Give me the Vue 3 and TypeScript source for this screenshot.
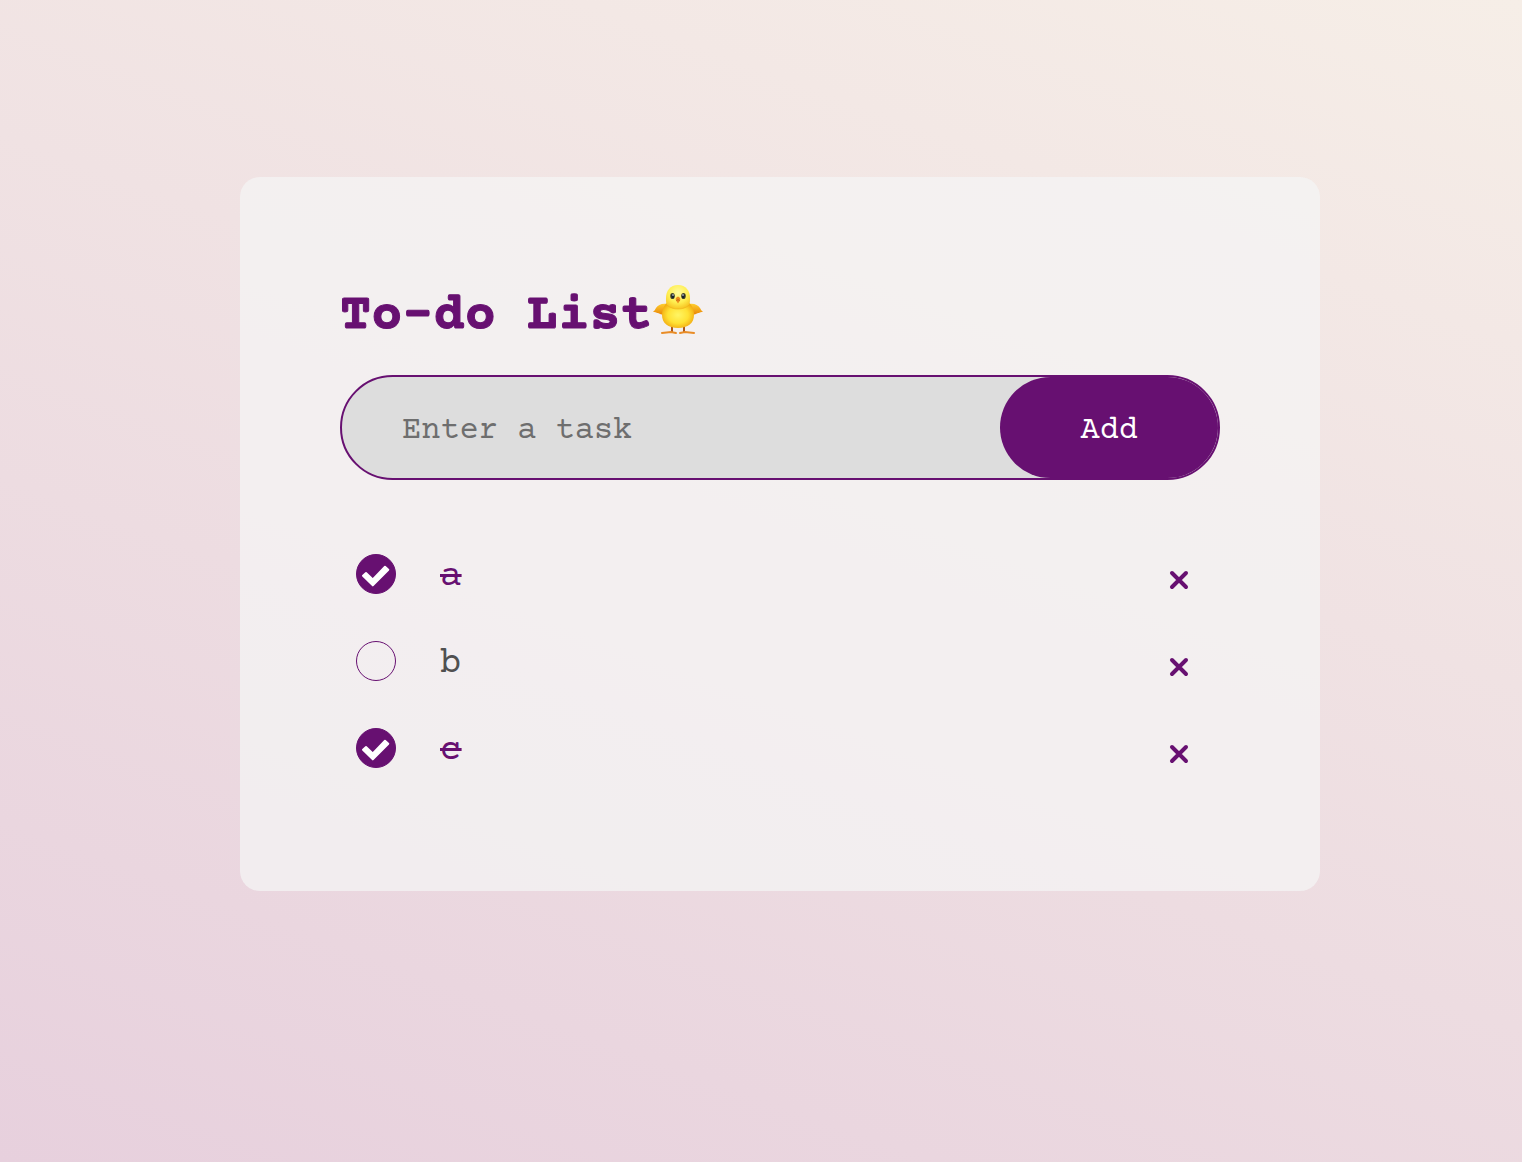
<script setup lang="ts">
import { ref } from 'vue'

interface Task {
  id: number
  text: string
  done: boolean
}

const draft = ref('')
const tasks = ref<Task[]>([
  { id: 1, text: 'a', done: true },
  { id: 2, text: 'b', done: false },
  { id: 3, text: 'c', done: true },
])
let nextId = 4

function addTask() {
  const text = draft.value.trim()
  if (!text) return
  tasks.value.push({ id: nextId++, text, done: false })
  draft.value = ''
}

function removeTask(id: number) {
  tasks.value = tasks.value.filter((task) => task.id !== id)
}
</script>

<template>
  <div class="page">
    <main class="card">
      <h1 class="title">
        <span>To-do List</span>
        <svg class="chick" viewBox="0 0 52 52" aria-hidden="true">
          <defs>
            <radialGradient id="body" cx="50%" cy="50%" r="58%">
              <stop offset="0" stop-color="#fff564" />
              <stop offset="0.55" stop-color="#ffe235" />
              <stop offset="1" stop-color="#f0a30c" />
            </radialGradient>
            <radialGradient id="head" cx="50%" cy="32%" r="70%">
              <stop offset="0" stop-color="#fffb9c" />
              <stop offset="0.6" stop-color="#ffee50" />
              <stop offset="1" stop-color="#f7c220" />
            </radialGradient>
            <linearGradient id="wing" x1="0" y1="0" x2="0" y2="1">
              <stop offset="0" stop-color="#ffcf30" />
              <stop offset="1" stop-color="#e98607" />
            </linearGradient>
          </defs>
          <g fill="none" stroke-linecap="round">
            <path d="M20 42v6M32 42v6" stroke="#a9561c" stroke-width="2" />
            <path d="M10 49l9-1 5 1M28 49l5-1 9 1" stroke="#e98c26" stroke-width="2" />
          </g>
          <path d="M15 20c-5-1-9 1-11 4-1 2-2 3-3 4 2 0 3 0 4 1 1 0 2 0 3 1 3 1 6 1 8-1zM37 20c5-1 9 1 11 4 1 2 2 3 3 4-2 0-3 0-4 1-1 0-2 0-3 1-3 1-6 1-8-1z" fill="url(#wing)" />
          <path d="M16 18c-4 3-6 8-6 13 0 8 6 13 16 13s16-5 16-13c0-5-2-10-6-13z" fill="url(#body)" />
          <path d="M26 1C18 1 14 7 14 14c0 3 0 5 1 7 3 3 7 4 11 4s8-1 11-4c1-2 1-4 1-7C38 7 34 1 26 1z" fill="url(#head)" />
          <path d="M15 21c3 3 7 4 11 4s8-1 11-4" fill="none" stroke="#eda91a" stroke-width="1" opacity="0.500" />
          <ellipse cx="20.500" cy="12" rx="2.300" ry="3.100" fill="#4b4a28" />
          <ellipse cx="31.500" cy="12" rx="2.300" ry="3.100" fill="#4b4a28" />
          <ellipse cx="20.800" cy="12" rx="1.500" ry="2.300" fill="#16202c" />
          <ellipse cx="31.200" cy="12" rx="1.500" ry="2.300" fill="#16202c" />
          <circle cx="21" cy="11" r="0.800" fill="#fff" />
          <circle cx="31" cy="11" r="0.800" fill="#fff" />
          <path d="M26 12.500c2 1 3 2 2 4l-2 3-2-3c-1-2 0-3 2-4z" fill="#ee8d1c" />
          <path d="M24.500 16.500c1-1 2-1 3 0" fill="none" stroke="#b4561a" stroke-width="0.800" />
        </svg>
      </h1>

      <form class="entry" @submit.prevent="addTask">
        <input v-model="draft" class="field" type="text" placeholder="Enter a task" aria-label="Enter a task" />
        <button class="add" type="submit">Add</button>
      </form>

      <ul class="tasks">
        <li v-for="task in tasks" :key="task.id" class="task">
          <label class="choice" :class="{ done: task.done }">
            <span class="mark">
              <input v-model="task.done" class="box" type="checkbox" />
              <svg v-if="task.done" class="tick" viewBox="0 0 40 40" aria-hidden="true">
                <path d="M7 21.700L10 19l6.800 6.500L29 12.700l3.300 3L16.800 31.400z" />
              </svg>
            </span>
            <span class="text">{{ task.text }}</span>
          </label>
          <button class="remove" type="button" :aria-label="`Remove ${task.text}`" @click="removeTask(task.id)">
            <svg viewBox="0 0 22 20" aria-hidden="true">
              <path d="M4 3l14 14M18 3L4 17" />
            </svg>
          </button>
        </li>
      </ul>
    </main>
  </div>
</template>

<style>
body {
  margin: 0;
}
</style>

<style scoped>
.page {
  box-sizing: border-box;
  min-height: 100vh;
  padding: 177px 202px 100px 240px;
  background: linear-gradient(20deg, #e7d0dd, #f6eee7);
  font-family: "Courier Prime", "Courier New", "Liberation Mono", monospace;
  color: #671071;
}

.card {
  box-sizing: border-box;
  padding: 100px 100px 99px;
  border-radius: 20px;
  background: rgba(244, 244, 244, 0.75);
}

.title {
  display: flex;
  align-items: flex-start;
  height: 66px;
  margin: 0 0 32px;
  font-size: 52px;
  line-height: 80px;
  font-weight: 700;
  -webkit-text-stroke: 1px currentColor;
}

.chick {
  width: 52px;
  height: 66px;
}

.entry {
  display: flex;
  box-sizing: border-box;
  height: 105px;
  border: 2px solid #671071;
  border-radius: 53px;
  background: #ddd;
}

.field {
  flex: 1;
  min-width: 0;
  padding: 6px 20px 0 60px;
  border: 0;
  outline: 0;
  background: transparent;
  color: #555;
  font: inherit;
  font-size: 32px;
}

.field::placeholder {
  color: #6e6e6e;
  opacity: 1;
}

.add {
  padding: 6px 80px 0;
  border: 0;
  border-radius: 51px;
  background: #671071;
  color: #fff;
  font: inherit;
  font-size: 32px;
  cursor: pointer;
}

.tasks {
  margin: 51px 0 0;
  padding: 0;
  list-style: none;
}

.task {
  display: flex;
  align-items: flex-start;
  box-sizing: border-box;
  height: 87px;
  padding: 23px 30px 0 16px;
}

.choice {
  display: flex;
  flex: 1;
  align-items: flex-start;
  gap: 44px;
  color: #505050;
  font-size: 36px;
  line-height: 46px;
}

.mark {
  display: grid;
  width: 40px;
  height: 40px;
}

.box,
.tick {
  grid-area: 1 / 1;
  width: 40px;
  height: 40px;
}

.box {
  appearance: none;
  box-sizing: border-box;
  margin: 0;
  border: 1px solid #671071;
  border-radius: 50%;
}

.box:checked {
  background: #671071;
}

.tick {
  fill: #fff;
  stroke: #fff;
  stroke-width: 2;
  stroke-linejoin: round;
  pointer-events: none;
}

.choice.done {
  color: #671071;
}

.done .text {
  text-decoration: line-through;
  text-decoration-thickness: 3px;
}

.remove {
  display: flex;
  padding: 16px 0 0;
  border: 0;
  background: transparent;
  cursor: pointer;
}

.remove svg {
  width: 22px;
  height: 20px;
  fill: none;
  stroke: #671071;
  stroke-width: 4;
  stroke-linecap: round;
}
</style>
